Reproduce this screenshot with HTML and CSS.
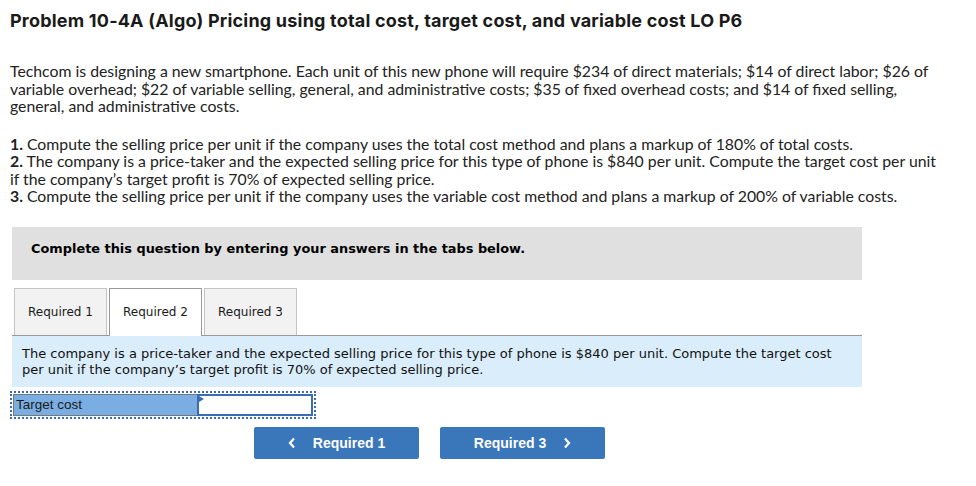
FILE: index.html
```html
<!DOCTYPE html>
<html>
<head>
<meta charset="utf-8">
<link rel="stylesheet" href="styles.css">
</head>
<body>
<div class="page">
  <h1 class="title">Problem 10-4A (Algo) Pricing using total cost, target cost, and variable cost LO P6</h1>
  <p class="intro">Techcom is designing a new smartphone. Each unit of this new phone will require $234 of direct materials; $14 of direct labor; $26 of variable overhead; $22 of variable selling, general, and administrative costs; $35 of fixed overhead costs; and $14 of fixed selling, general, and administrative costs.</p>
  <div class="reqs">
    <div><b>1.</b> Compute the selling price per unit if the company uses the total cost method and plans a markup of 180% of total costs.</div>
    <div><b>2.</b> The company is a price-taker and the expected selling price for this type of phone is $840 per unit. Compute the target cost per unit if the company’s target profit is 70% of expected selling price.</div>
    <div><b>3.</b> Compute the selling price per unit if the company uses the variable cost method and plans a markup of 200% of variable costs.</div>
  </div>
  <div class="notice">Complete this question by entering your answers in the tabs below.</div>
  <div class="tabs">
    <div class="tab">Required 1</div>
    <div class="tab active">Required 2</div>
    <div class="tab">Required 3</div>
  </div>
  <div class="info">The company is a price-taker and the expected selling price for this type of phone is $840 per unit. Compute the target cost per unit if the company’s target profit is 70% of expected selling price.</div>
  <div class="answer">
    <div class="label">Target cost</div>
    <div class="input"><span class="tri"></span></div>
  </div>
  <div class="nav">
    <div class="btn"><svg class="chev" width="8" height="12" viewBox="0 0 8 12"><path d="M6 1.5 L2 6 L6 10.5" fill="none" stroke="#fff" stroke-width="2.2"/></svg>Required 1</div>
    <div class="btn">Required 3<svg class="chev right" width="8" height="12" viewBox="0 0 8 12"><path d="M2 1.5 L6 6 L2 10.5" fill="none" stroke="#fff" stroke-width="2.2"/></svg></div>
  </div>
</div>
</body>
</html>
```
FILE: styles.css
```css
* { box-sizing: border-box; }
body { margin: 0; background: #fff; }
.page { padding: 10px 10px 0 10px; font-family: "Lato", "Liberation Sans", sans-serif; color: #222; }
.title { margin: 0; font-family: "Inter", "Lato", sans-serif; font-size: 18px; font-weight: 700; line-height: 22px; color: #1a1a1a; letter-spacing: 0.2px; }
.intro { margin: 30px 0 0 0; max-width: 932px; font-size: 15.8px; line-height: 17.5px; }
.reqs { margin-top: 20px; max-width: 932px; font-size: 15.8px; line-height: 17.5px; }
.reqs b { font-weight: 700; }
.notice { margin: 22px 0 0 2px; width: 850px; height: 53px; background: #e0e0e0; padding: 13px 0 0 19px; font-family: "DejaVu Sans", Verdana, sans-serif; font-weight: 700; font-size: 12.9px; line-height: 17px; color: #000; }
.tabs { display: flex; margin: 8px 0 0 2px; width: 850px; border-bottom: 1px solid #999; height: 48px; padding-left: 2px; gap: 2px; }
.tab { width: 93px; height: 47px; background: #f2f2f2; border: 1px solid #c4c4c4; border-bottom: none; font-family: "DejaVu Sans", Verdana, sans-serif; font-size: 12px; display: flex; align-items: center; justify-content: center; color: #1a1a1a; }
.tab.active { background: #fff; border-color: #999; height: 48px; margin-bottom: -1px; }
.info { margin-left: 2px; width: 850px; height: 51px; background: #daedfa; padding: 10px 16px 0 10px; font-family: "DejaVu Sans", Verdana, sans-serif; font-size: 13px; line-height: 16px; color: #111; }
.answer { display: flex; margin-top: 4px; width: 306px; height: 28px; border: 2px dotted #3b6cb0; padding: 1px; }
.label { width: 184px; background: #7aaee2; border: 1px solid #777; border-right: none; font-family: "Liberation Sans", Arial, sans-serif; font-size: 13.5px; color: #1a1a1a; display: flex; align-items: center; padding-left: 2px; }
.input { position: relative; flex: 1; background: #fff; border: 2px solid #3b6cb0; }
.tri { position: absolute; left: 0; top: 0; width: 0; height: 0; border-top: 3px solid transparent; border-bottom: 3px solid transparent; border-left: 5px solid #3b6cb0; }
.nav { display: flex; gap: 21px; margin-top: 8px; padding-left: 244px; }
.btn { width: 165px; height: 32px; background: #3a76ba; border-radius: 2px; color: #fff; font-family: "Liberation Sans", Arial, sans-serif; font-weight: 700; font-size: 14px; display: flex; align-items: center; justify-content: center; }
.chev { margin-right: 17px; }
.chev.right { margin-right: 0; margin-left: 17px; }
```
